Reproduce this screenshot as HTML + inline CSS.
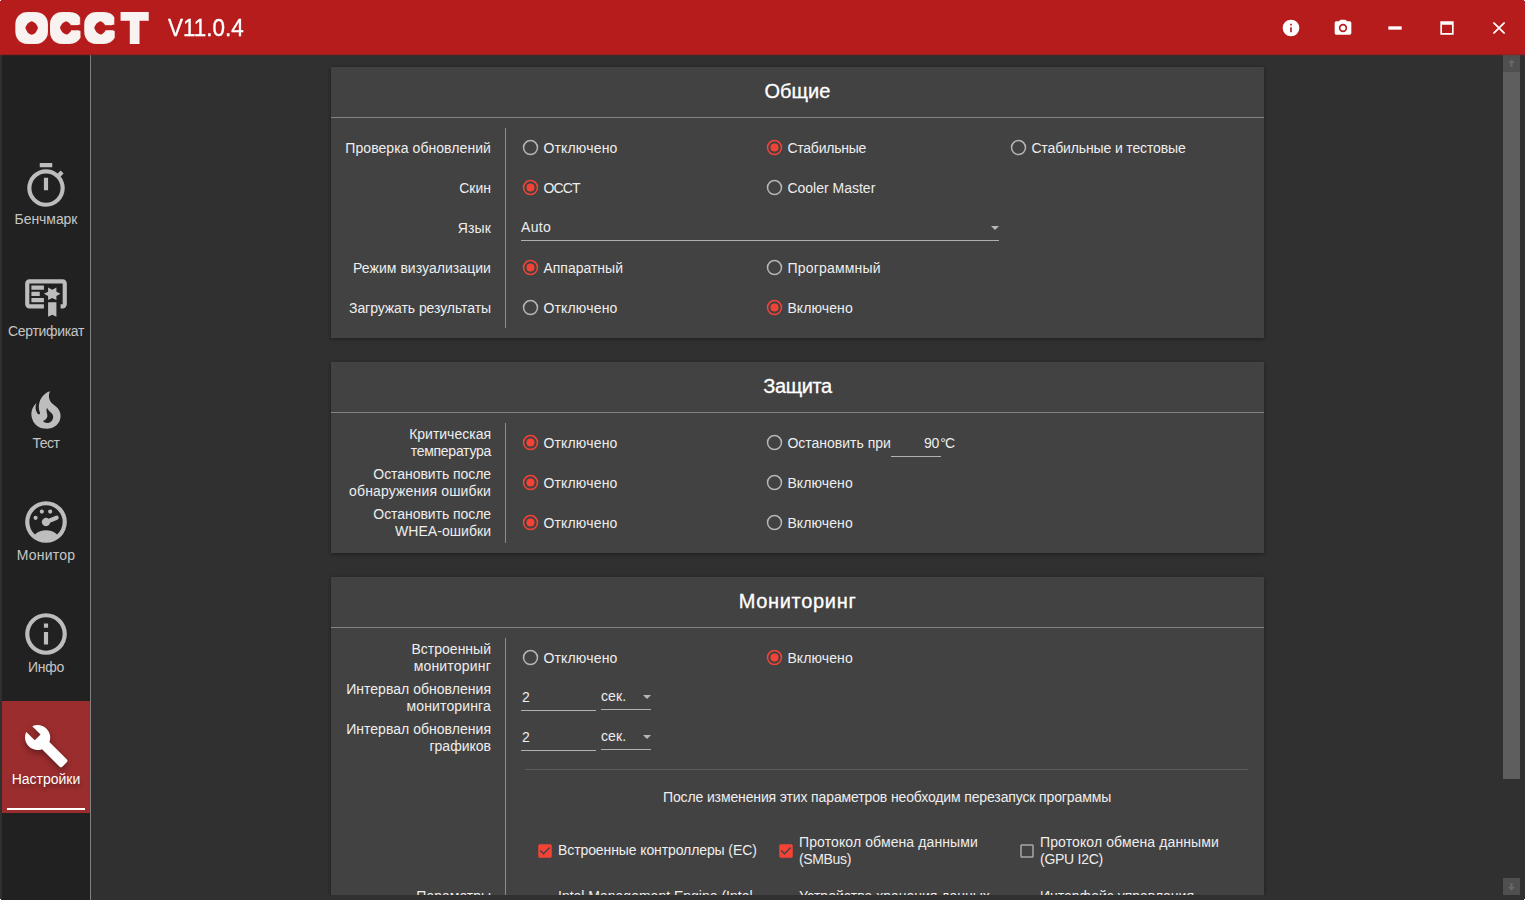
<!DOCTYPE html>
<html lang="ru">
<head>
<meta charset="utf-8">
<title>OCCT V11.0.4</title>
<style>
*{box-sizing:border-box;margin:0;padding:0}
html,body{width:1525px;height:900px;overflow:hidden;background:#303030}
body{position:relative;font-family:"Liberation Sans",sans-serif;font-size:14px;line-height:17px;color:#eee}
.abs,.t,.r,.card,.hr,.vr,.ul,.cb,.arr{position:absolute}
#hdr{position:absolute;left:0;top:0;width:1525px;height:57px;background:linear-gradient(#b71c1c,#b71c1c 54px,rgba(183,28,28,.68) 54px,rgba(183,28,28,.68) 55px,rgba(150,24,24,.2) 55px,rgba(150,24,24,.2) 56px,rgba(150,24,24,.05) 56px,rgba(150,24,24,.05) 57px);z-index:5}
#logo{position:absolute;left:0;top:0}
#ver{position:absolute;left:167.5px;top:14px;font-size:24px;line-height:28px;color:#fff;-webkit-text-stroke:.35px #fff;white-space:nowrap;transform:scaleX(.935);transform-origin:0 0}
.wb{position:absolute;top:18px;width:20px;height:20px;fill:#fff}
#side{position:absolute;left:2px;top:55px;width:88px;height:845px;background:#212121}
#sideline{position:absolute;left:90px;top:55px;width:1px;height:845px;background:#808080}
.nav{position:absolute;left:0;width:88px;height:112px;color:#c6c6c6}
.nav svg{position:absolute;left:19px;top:20px;width:50px;height:50px;fill:#bdbdbd}
.nav b{position:absolute;left:-10px;width:108px;top:70px;text-align:center;font-weight:400;font-size:14px;line-height:17px;white-space:nowrap}
.nav.on{background:#9b2d2e;color:#fff;width:89px}
.nav.on svg{fill:#fff;filter:drop-shadow(0 3px 3px rgba(0,0,0,.35))}
.nav.on b{text-shadow:0 3px 4px rgba(0,0,0,.35)}
.nav.on i{position:absolute;left:5px;top:107px;width:78px;height:2px;background:#fff}
#main{position:absolute;left:91px;top:55px;width:1434px;height:840px;overflow:hidden}
.card{left:240px;width:933px;background:#424242;box-shadow:0 1px 4px rgba(0,0,0,.4)}
.ttl{color:#fff;position:absolute;left:0;width:933px;text-align:center;font-size:20px;line-height:24px;white-space:nowrap;-webkit-text-stroke:.3px #fff}
.hr{left:0;width:933px;height:1px;background:#848484}
.vr{width:1px;background:#8c8c8c}
.t{white-space:nowrap;line-height:17px}
.lab{position:absolute;text-align:right;white-space:nowrap;line-height:17px;right:773px}
.r{width:20px;height:20px;fill:none;stroke:#b6b6b6;stroke-width:1.5}
.r.on{stroke:#f44336}
.r.on .d{fill:#f44336;stroke:none}
.ul{height:1px;background:#b0b0b0}
.arr{width:0;height:0;border-left:4px solid transparent;border-right:4px solid transparent;border-top:4px solid #b8b8b8}
.cb{width:18px;height:18px}
.px{position:absolute;width:1px;height:1px;background:#fff;z-index:9}
#sb{position:absolute;left:1503px;top:55px;width:17px;height:840px}
</style>
</head>
<body>
<div id="main">
<div class="card" style="top:12px;height:271px">
<div class="ttl" style="top:12px"><span style="letter-spacing:0.07px">Общие</span></div>
<div class="hr" style="top:50px"></div>
<i class="vr" style="left:174px;top:61px;height:200px"></i>
<div class="lab" style="top:72.5px"><span style="letter-spacing:0.07px">Проверка обновлений</span></div>
<svg class="r" viewBox="0 0 20 20" style="left:190px;top:71px"><circle cx="9.5" cy="9.6" r="7"/></svg>
<div class="t" style="left:212.4px;top:72.5px;"><span style="letter-spacing:0.18px">Отключено</span></div>
<svg class="r on" viewBox="0 0 20 20" style="left:434px;top:71px"><circle cx="9.5" cy="9.6" r="7"/><circle class="d" cx="9.5" cy="9.6" r="4"/></svg>
<div class="t" style="left:456.4px;top:72.5px;"><span style="letter-spacing:-0.23px">Стабильные</span></div>
<svg class="r" viewBox="0 0 20 20" style="left:678px;top:71px"><circle cx="9.5" cy="9.6" r="7"/></svg>
<div class="t" style="left:700.4px;top:72.5px;"><span style="letter-spacing:-0.13px">Стабильные и тестовые</span></div>
<div class="lab" style="top:112.5px">Скин</div>
<svg class="r on" viewBox="0 0 20 20" style="left:190px;top:111px"><circle cx="9.5" cy="9.6" r="7"/><circle class="d" cx="9.5" cy="9.6" r="4"/></svg>
<div class="t" style="left:212.4px;top:112.5px;"><span style="letter-spacing:-0.82px">OCCT</span></div>
<svg class="r" viewBox="0 0 20 20" style="left:434px;top:111px"><circle cx="9.5" cy="9.6" r="7"/></svg>
<div class="t" style="left:456.4px;top:112.5px;">Cooler Master</div>
<div class="lab" style="top:152.5px"><span style="letter-spacing:0.15px">Язык</span></div>
<div class="t" style="left:190px;top:151.5px;"><span style="letter-spacing:0.3px">Auto</span></div>
<i class="ul" style="left:190px;top:173px;width:478px"></i>
<i class="arr" style="left:660px;top:159px"></i>
<div class="lab" style="top:192.5px"><span style="letter-spacing:0.05px">Режим визуализации</span></div>
<svg class="r on" viewBox="0 0 20 20" style="left:190px;top:191px"><circle cx="9.5" cy="9.6" r="7"/><circle class="d" cx="9.5" cy="9.6" r="4"/></svg>
<div class="t" style="left:212.4px;top:192.5px;">Аппаратный</div>
<svg class="r" viewBox="0 0 20 20" style="left:434px;top:191px"><circle cx="9.5" cy="9.6" r="7"/></svg>
<div class="t" style="left:456.4px;top:192.5px;"><span style="letter-spacing:0.2px">Программный</span></div>
<div class="lab" style="top:232.5px"><span style="letter-spacing:-0.07px">Загружать результаты</span></div>
<svg class="r" viewBox="0 0 20 20" style="left:190px;top:231px"><circle cx="9.5" cy="9.6" r="7"/></svg>
<div class="t" style="left:212.4px;top:232.5px;"><span style="letter-spacing:0.18px">Отключено</span></div>
<svg class="r on" viewBox="0 0 20 20" style="left:434px;top:231px"><circle cx="9.5" cy="9.6" r="7"/><circle class="d" cx="9.5" cy="9.6" r="4"/></svg>
<div class="t" style="left:456.4px;top:232.5px;"><span style="letter-spacing:0.1px">Включено</span></div>
</div>
<div class="card" style="top:307px;height:191px">
<div class="ttl" style="top:12px"><span style="letter-spacing:-0.42px">Защита</span></div>
<div class="hr" style="top:50px"></div>
<i class="vr" style="left:174px;top:61px;height:120px"></i>
<div class="lab" style="top:64px">Критическая<br><span style="letter-spacing:-0.27px">температура</span></div>
<svg class="r on" viewBox="0 0 20 20" style="left:190px;top:71px"><circle cx="9.5" cy="9.6" r="7"/><circle class="d" cx="9.5" cy="9.6" r="4"/></svg>
<div class="t" style="left:212.4px;top:72.5px;"><span style="letter-spacing:0.18px">Отключено</span></div>
<svg class="r" viewBox="0 0 20 20" style="left:434px;top:71px"><circle cx="9.5" cy="9.6" r="7"/></svg>
<div class="t" style="left:456.4px;top:72.5px;">Остановить при</div>
<div class="t" style="left:593px;top:72.5px;"><span style="letter-spacing:-0.29px">90</span></div>
<div class="t" style="left:609.3px;top:72.5px;"><span style="letter-spacing:-0.86px">°C</span></div>
<i class="ul" style="left:560px;top:94px;width:50px"></i>
<div class="lab" style="top:104px"><span style="letter-spacing:-0.06px">Остановить после</span><br><span style="letter-spacing:0.16px">обнаружения ошибки</span></div>
<svg class="r on" viewBox="0 0 20 20" style="left:190px;top:111px"><circle cx="9.5" cy="9.6" r="7"/><circle class="d" cx="9.5" cy="9.6" r="4"/></svg>
<div class="t" style="left:212.4px;top:112.5px;"><span style="letter-spacing:0.18px">Отключено</span></div>
<svg class="r" viewBox="0 0 20 20" style="left:434px;top:111px"><circle cx="9.5" cy="9.6" r="7"/></svg>
<div class="t" style="left:456.4px;top:112.5px;"><span style="letter-spacing:0.1px">Включено</span></div>
<div class="lab" style="top:144px"><span style="letter-spacing:-0.06px">Остановить после</span><br><span style="letter-spacing:0.05px">WHEA-ошибки</span></div>
<svg class="r on" viewBox="0 0 20 20" style="left:190px;top:151px"><circle cx="9.5" cy="9.6" r="7"/><circle class="d" cx="9.5" cy="9.6" r="4"/></svg>
<div class="t" style="left:212.4px;top:152.5px;"><span style="letter-spacing:0.18px">Отключено</span></div>
<svg class="r" viewBox="0 0 20 20" style="left:434px;top:151px"><circle cx="9.5" cy="9.6" r="7"/></svg>
<div class="t" style="left:456.4px;top:152.5px;"><span style="letter-spacing:0.1px">Включено</span></div>
</div>
<div class="card" style="top:522px;height:383px">
<div class="ttl" style="top:12px"><span style="letter-spacing:0.68px">Мониторинг</span></div>
<div class="hr" style="top:50px"></div>
<i class="vr" style="left:174px;top:61px;height:262px"></i>
<div class="lab" style="top:64px">Встроенный<br><span style="letter-spacing:0.19px">мониторинг</span></div>
<svg class="r" viewBox="0 0 20 20" style="left:190px;top:71px"><circle cx="9.5" cy="9.6" r="7"/></svg>
<div class="t" style="left:212.4px;top:72.5px;"><span style="letter-spacing:0.18px">Отключено</span></div>
<svg class="r on" viewBox="0 0 20 20" style="left:434px;top:71px"><circle cx="9.5" cy="9.6" r="7"/><circle class="d" cx="9.5" cy="9.6" r="4"/></svg>
<div class="t" style="left:456.4px;top:72.5px;"><span style="letter-spacing:0.1px">Включено</span></div>
<div class="lab" style="top:104px"><span style="letter-spacing:0.03px">Интервал обновления</span><br><span style="letter-spacing:0.15px">мониторинга</span></div>
<div class="t" style="left:191px;top:111.5px;">2</div>
<i class="ul" style="left:190px;top:133px;width:75px"></i>
<div class="t" style="left:270px;top:110.5px;"><span style="letter-spacing:0.12px">сек.</span></div>
<i class="arr" style="left:312px;top:118px"></i>
<i class="ul" style="left:270px;top:132px;width:50px"></i>
<div class="lab" style="top:144px"><span style="letter-spacing:0.03px">Интервал обновления</span><br>графиков</div>
<div class="t" style="left:191px;top:151.5px;">2</div>
<i class="ul" style="left:190px;top:173px;width:75px"></i>
<div class="t" style="left:270px;top:150.5px;"><span style="letter-spacing:0.12px">сек.</span></div>
<i class="arr" style="left:312px;top:158px"></i>
<i class="ul" style="left:270px;top:172px;width:50px"></i>
<i class="ul" style="left:194px;top:192px;width:723px;background:#5c5c5c"></i>
<div class="t" style="left:332px;top:211.5px;"><span style="letter-spacing:-0.13px">После изменения этих параметров необходим перезапуск программы</span></div>
<svg class="cb" viewBox="0 0 24 24" style="left:205px;top:265px"><path fill="#f44336" d="M10,17L5,12L6.41,10.58L10,14.17L17.59,6.58L19,8M19,3H5C3.89,3 3,3.89 3,5V19A2,2 0 0,0 5,21H19A2,2 0 0,0 21,19V5C21,3.89 20.1,3 19,3Z"/></svg>
<div class="t" style="left:227px;top:264.5px;"><span style="letter-spacing:-0.1px">Встроенные контроллеры (EC)</span></div>
<svg class="cb" viewBox="0 0 24 24" style="left:446px;top:265px"><path fill="#f44336" d="M10,17L5,12L6.41,10.58L10,14.17L17.59,6.58L19,8M19,3H5C3.89,3 3,3.89 3,5V19A2,2 0 0,0 5,21H19A2,2 0 0,0 21,19V5C21,3.89 20.1,3 19,3Z"/></svg>
<div class="t" style="left:468px;top:256.5px;"><span style="letter-spacing:0.11px">Протокол обмена данными</span><br><span style="letter-spacing:-0.35px">(SMBus)</span></div>
<svg class="cb" viewBox="0 0 24 24" style="left:687px;top:265px"><path fill="#a8a8a8" d="M19,3H5C3.89,3 3,3.89 3,5V19A2,2 0 0,0 5,21H19A2,2 0 0,0 21,19V5C21,3.89 20.1,3 19,3M19,5V19H5V5H19Z"/></svg>
<div class="t" style="left:709px;top:256.5px;"><span style="letter-spacing:0.11px">Протокол обмена данными</span><br><span style="letter-spacing:-0.26px">(GPU I2C)</span></div>
<div class="lab" style="top:311px">Параметры</div>
<div class="t" style="left:227px;top:311px;">Intel Management Engine (Intel</div>
<div class="t" style="left:468px;top:311px;">Устройства хранения данных</div>
<div class="t" style="left:709px;top:311px;">Интерфейс управления</div>
</div>
</div>
<div id="sb"><div class="abs" style="left:0;top:0;width:17px;height:17px;background:#4f4f4f"></div><svg class="abs" viewBox="0 0 17 17" style="left:0;top:0;width:17px;height:17px"><path fill="#686868" d="M8.5 4.5 L12 8 H9.5 V12 H7.5 V8 H5 Z"/></svg><div class="abs" style="left:0;top:17px;width:17px;height:707px;background:#5e5e5e"></div><div class="abs" style="left:0;top:823px;width:17px;height:17px;background:#4f4f4f"></div><svg class="abs" viewBox="0 0 17 17" style="left:0;top:823px;width:17px;height:17px"><path fill="#686868" d="M8.5 12.5 L12 9 H9.5 V5 H7.5 V9 H5 Z"/></svg></div>
<div id="side">
<div class="nav" style="top:86px"><svg viewBox="0 0 24 24"><path d="M12,20A7,7 0 0,1 5,13A7,7 0 0,1 12,6A7,7 0 0,1 19,13A7,7 0 0,1 12,20M19.03,7.39L20.45,5.97C20,5.46 19.55,5 19.04,4.56L17.62,6C16.07,4.74 14.12,4 12,4A9,9 0 0,0 3,13A9,9 0 0,0 12,22C17,22 21,17.97 21,13C21,10.88 20.26,8.93 19.03,7.39M11,14H13V8H11M15,1H9V3H15V1Z"/></svg><b><span style="letter-spacing:-0.07px">Бенчмарк</span></b></div>
<div class="nav" style="top:198px"><svg viewBox="0 0 24 24"><path d="M13 21L15 20L17 21V14H13M17 9V7L15 8L13 7V9L11 10L13 11V13L15 12L17 13V11L19 10M20 3H4A2 2 0 0 0 2 5V15A2 2 0 0 0 4 17H11V15H4V5H20V15H19V17H20A2 2 0 0 0 22 15V5A2 2 0 0 0 20 3M11 8H5V6H11M9 11H5V9H9M11 14H5V12H11Z"/></svg><b><span style="letter-spacing:-0.33px">Сертификат</span></b></div>
<div class="nav" style="top:310px"><svg viewBox="0 0 24 24"><path d="M17.66 11.2C17.43 10.9 17.15 10.64 16.89 10.38C16.22 9.78 15.46 9.35 14.82 8.72C13.33 7.26 13 4.85 13.95 3C13 3.23 12.17 3.75 11.46 4.32C8.87 6.4 7.85 10.07 9.07 13.22C9.11 13.32 9.15 13.42 9.15 13.55C9.15 13.77 9 13.97 8.8 14.05C8.57 14.15 8.33 14.09 8.14 13.93C8.08 13.88 8.04 13.83 8 13.76C6.87 12.33 6.69 10.28 7.45 8.64C5.78 10 4.87 12.3 5 14.47C5.06 14.97 5.12 15.47 5.29 15.97C5.43 16.57 5.7 17.17 6 17.7C7.08 19.43 8.95 20.67 10.96 20.92C13.1 21.19 15.39 20.8 17.03 19.32C18.86 17.66 19.5 15 18.56 12.72L18.43 12.46C18.22 12 17.66 11.2 17.66 11.2M14.5 17.5C14.22 17.74 13.76 18 13.4 18.1C12.28 18.5 11.16 17.94 10.5 17.28C11.69 17 12.4 16.12 12.61 15.23C12.78 14.43 12.46 13.77 12.33 13C12.21 12.26 12.23 11.63 12.5 10.94C12.69 11.32 12.89 11.7 13.13 12C13.9 13 15.11 13.44 15.37 14.8C15.41 14.94 15.43 15.08 15.43 15.23C15.46 16.05 15.1 16.95 14.5 17.5H14.5Z"/></svg><b><span style="letter-spacing:-0.49px">Тест</span></b></div>
<div class="nav" style="top:422px"><svg viewBox="0 0 24 24"><path d="M12,2A10,10 0 0,0 2,12A10,10 0 0,0 12,22A10,10 0 0,0 22,12A10,10 0 0,0 12,2M12,4A8,8 0 0,1 20,12C20,14.4 19,16.5 17.3,18C15.9,16.7 14,16 12,16C10,16 8.2,16.7 6.7,18C5,16.5 4,14.4 4,12A8,8 0 0,1 12,4M10,6A1,1 0 0,0 9,7A1,1 0 0,0 10,8A1,1 0 0,0 11,7A1,1 0 0,0 10,6M14,6A1,1 0 0,0 13,7A1,1 0 0,0 14,8A1,1 0 0,0 15,7A1,1 0 0,0 14,6M17.09,8.94C16.96,8.94 16.84,8.97 16.7,9L13.5,10.32L13.23,10.43C12.67,10 11.91,9.88 11.25,10.15C10.23,10.56 9.73,11.73 10.15,12.75C10.56,13.77 11.73,14.27 12.75,13.85C13.41,13.59 13.88,13 14,12.28L14.23,12.18L17.45,10.88L17.47,10.87C18,10.66 18.23,10.08 18.03,9.56C17.87,9.18 17.5,8.93 17.09,8.94M7,9A1,1 0 0,0 6,10A1,1 0 0,0 7,11A1,1 0 0,0 8,10A1,1 0 0,0 7,9Z"/></svg><b><span style="letter-spacing:0.22px">Монитор</span></b></div>
<div class="nav" style="top:534px"><svg viewBox="0 0 24 24"><path d="M11,9H13V7H11M12,20C7.59,20 4,16.41 4,12C4,7.59 7.59,4 12,4C16.41,4 20,7.59 20,12C20,16.41 16.41,20 12,20M12,2A10,10 0 0,0 2,12A10,10 0 0,0 12,22A10,10 0 0,0 22,12A10,10 0 0,0 12,2M11,17H13V11H11V17Z"/></svg><b><span style="letter-spacing:-0.28px">Инфо</span></b></div>
<div class="nav on" style="top:646px"><svg viewBox="0 0 24 24"><path transform="translate(12.15 12.05) scale(.925) translate(-12 -12)" d="M22.7,19L13.6,9.9C14.5,7.6 14,4.9 12.1,3C10.1,1 7.1,0.6 4.7,1.7L9,6L6,9L1.6,4.7C0.4,7.1 0.9,10.1 2.9,12.1C4.8,14 7.5,14.5 9.8,13.6L18.9,22.7C19.3,23.1 19.9,23.1 20.3,22.7L22.6,20.4C23.1,20 23.1,19.3 22.7,19Z"/></svg><b><span style="letter-spacing:-0.02px">Настройки</span></b><i></i></div>
</div>
<div id="sideline"></div>
<div id="hdr">
<svg id="logo" width="165" height="55" viewBox="0 0 165 55"><defs><filter id="blk" x="-10%" y="-30%" width="120%" height="160%"><feMorphology operator="dilate" radius="3 3"/></filter></defs><g filter="url(#blk)"><text transform="scale(1.07 1)" x="15.4 47.6 79.6 114.8" y="41.2" font-family="Liberation Sans, sans-serif" font-size="36.5" fill="#f8f2f0">OCCT</text></g></svg>
<div id="ver">V11.0.4</div>
<svg class="wb" viewBox="0 0 24 24" style="left:1281px"><path d="M13,9H11V7H13M13,17H11V11H13M12,2A10,10 0 0,0 2,12A10,10 0 0,0 12,22A10,10 0 0,0 22,12A10,10 0 0,0 12,2Z"/></svg>
<svg class="wb" viewBox="0 0 24 24" style="left:1333px"><path d="M4,4H7L9,2H15L17,4H20A2,2 0 0,1 22,6V18A2,2 0 0,1 20,20H4A2,2 0 0,1 2,18V6A2,2 0 0,1 4,4M12,7A5,5 0 0,0 7,12A5,5 0 0,0 12,17A5,5 0 0,0 17,12A5,5 0 0,0 12,7M12,9A3,3 0 0,1 15,12A3,3 0 0,1 12,15A3,3 0 0,1 9,12A3,3 0 0,1 12,9Z"/></svg>
<svg class="wb" viewBox="0 0 24 24" style="left:1385px"><path d="M20,14H4V10H20"/></svg>
<svg class="wb" viewBox="0 0 24 24" style="left:1437px"><path d="M4,4H20V20H4V4M6,8V18H18V8H6Z"/></svg>
<svg class="wb" viewBox="0 0 24 24" style="left:1489px"><path d="M13.46,12L19,17.54V19H17.54L12,13.46L6.46,19H5V17.54L10.54,12L5,6.46V5H6.46L12,10.54L17.54,5H19V6.46L13.46,12Z"/></svg>
</div>
<i class="px" style="left:0;top:0"></i><i class="px" style="left:1524px;top:0"></i><i class="px" style="left:0;top:899px"></i><i class="px" style="left:1524px;top:899px"></i>
</body>
</html>
